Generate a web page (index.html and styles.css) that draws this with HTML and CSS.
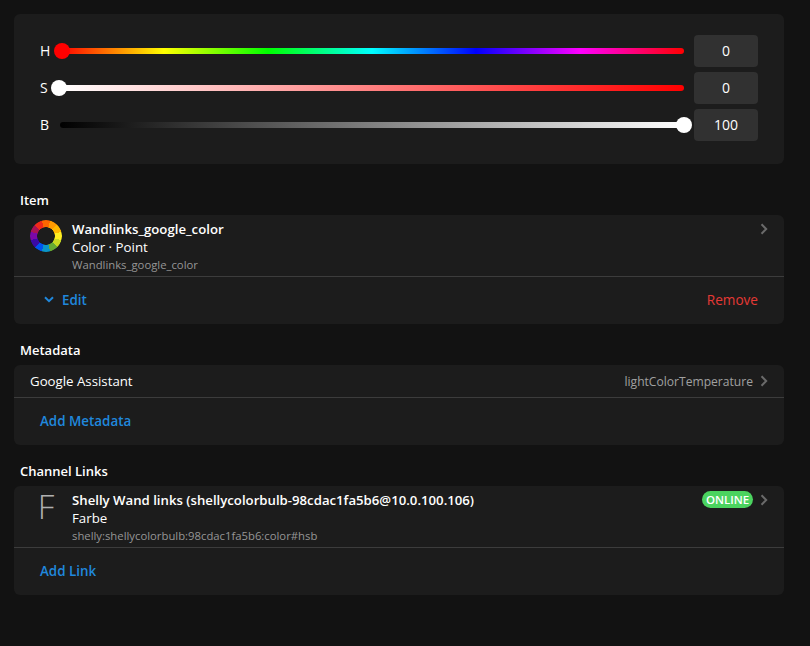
FILE: index.html
```html
<!DOCTYPE html>
<html lang="en">
<head>
<meta charset="utf-8">
<title>Item</title>
<link rel="stylesheet" href="styles.css">
</head>
<body>
<section class="card sliders">
  <div class="slider-row">
    <span class="slider-label">H</span>
    <div class="track track-h"><span class="knob knob-h"></span></div>
    <div class="num">0</div>
  </div>
  <div class="slider-row">
    <span class="slider-label">S</span>
    <div class="track track-s"><span class="knob knob-s"></span></div>
    <div class="num">0</div>
  </div>
  <div class="slider-row">
    <span class="slider-label">B</span>
    <div class="track track-b"><span class="knob knob-b"></span></div>
    <div class="num">100</div>
  </div>
</section>

<h2 class="heading heading-first">Item</h2>
<section class="card">
  <div class="media-row">
    <div class="media"><span class="wheel"></span></div>
    <div class="media-text">
      <div class="title">Wandlinks_google_color</div>
      <div class="sub">Color · Point</div>
      <div class="foot">Wandlinks_google_color</div>
    </div>
    <svg class="chev chev-top" viewBox="0 0 8 12"><path d="M1.5 1.2 6.2 6l-4.7 4.8"/></svg>
  </div>
  <div class="actions between">
    <a class="link edit"><svg class="down" viewBox="0 0 10 7"><path d="M1 1.2 5 5.2l4-4"/></svg>Edit</a>
    <a class="remove">Remove</a>
  </div>
</section>

<h2 class="heading">Metadata</h2>
<section class="card">
  <div class="meta-row">
    <span class="meta-name">Google Assistant</span>
    <span class="meta-val">lightColorTemperature</span>
    <svg class="chev" viewBox="0 0 8 12"><path d="M1.5 1.2 6.2 6l-4.7 4.8"/></svg>
  </div>
  <div class="actions wide"><a class="link">Add Metadata</a></div>
</section>

<h2 class="heading">Channel Links</h2>
<section class="card">
  <div class="media-row">
    <div class="media"><span class="letter">F</span></div>
    <div class="media-text">
      <div class="title">Shelly Wand links (shellycolorbulb-98cdac1fa5b6@10.0.100.106)</div>
      <div class="sub">Farbe</div>
      <div class="foot">shelly:shellycolorbulb:98cdac1fa5b6:color#hsb</div>
    </div>
    <span class="badge">ONLINE</span>
    <svg class="chev chev-top" viewBox="0 0 8 12"><path d="M1.5 1.2 6.2 6l-4.7 4.8"/></svg>
  </div>
  <div class="actions last"><a class="link">Add Link</a></div>
</section>
</body>
</html>
```

FILE: styles.css
```css
* { box-sizing: border-box; }
html, body { height: 100%; }
body {
  margin: 0;
  padding: 14px 26px 0 14px;
  background: #121212;
  color: #fff;
  font-family: "Open Sans", "Noto Sans", "Liberation Sans", sans-serif;
  font-size: 13px;
  overflow: hidden;
}
.card {
  background: #1c1c1c;
  border-radius: 6px;
}
.sliders {
  height: 150px;
  padding: 21px 26px 0 26px;
  display: flex;
  flex-direction: column;
  gap: 5px;
}
.slider-row {
  height: 32px;
  display: flex;
  align-items: center;
}
.slider-label { width: 20px; font-size: 14px; line-height: 18px; }
.track {
  position: relative;
  width: 624px;
  height: 6px;
  border-radius: 3px;
  margin-right: 10px;
}
.track-h { background: linear-gradient(to right, #f00 0%, #ff0 16.67%, #0f0 33.33%, #0ff 50%, #00f 66.67%, #f0f 83.33%, #f00 100%); }
.track-s { background: linear-gradient(to right, #fff, #f00); }
.track-b { background: linear-gradient(to right, #000, #fff); }
.knob {
  position: absolute;
  top: -5px;
  width: 16px;
  height: 16px;
  border-radius: 50%;
}
.knob-h { left: -6px; background: #f00; }
.knob-s { left: -9px; background: #fff; }
.knob-b { right: -8px; background: #fff; }
.num {
  width: 64px;
  height: 32px;
  background: #313131;
  border-radius: 4px;
  font-size: 14px;
  line-height: 32px;
  text-align: center;
}
.heading {
  margin: 0;
  height: 41px;
  padding: 17px 0 0 6px;
  font-size: 13px;
  line-height: 19px;
  font-weight: 600;
}
.heading-first {
  height: 51px;
  padding-top: 27px;
}
.media-row {
  position: relative;
  height: 62px;
  display: flex;
  border-bottom: 1px solid #3c3c3c;
  padding-right: 16px;
}
.media {
  width: 58px;
  flex: none;
  display: flex;
  justify-content: center;
  padding: 5px 0 0 6px;
}
.wheel {
  width: 32px;
  height: 32px;
  border-radius: 50%;
  background: conic-gradient(from -15deg,
    #ff6600 0 30deg, #ff9900 0 60deg, #ffb800 0 90deg, #ffee22 0 120deg,
    #c8d820 0 150deg, #66aa33 0 180deg, #0a96c8 0 210deg, #0055ee 0 240deg,
    #3a0aa5 0 270deg, #7a08a8 0 300deg, #a81255 0 330deg, #f02a1a 0 360deg);
  -webkit-mask: radial-gradient(circle, transparent 0 8.5px, #000 9px);
  mask: radial-gradient(circle, transparent 0 8.5px, #000 9px);
}
.letter {
  font-size: 33px;
  font-weight: 300;
  line-height: 36px;
  color: #b0b0b0;
  margin-top: -2px;
}
.media-text { flex: 1; padding-top: 5px; min-width: 0; }
.title { font-size: 13.2px; font-weight: 600; line-height: 19px; }
.sub { font-size: 13.3px; line-height: 17px; }
.foot { font-size: 11.3px; line-height: 17px; color: #969696; }
.chev {
  width: 8px;
  height: 12px;
  flex: none;
  fill: none;
  stroke: #6a6a6a;
  stroke-width: 2;
}
.chev-top { margin-top: 8px; }
.actions {
  height: 47px;
  padding-bottom: 2px;
  display: flex;
  align-items: center;
  font-size: 13.4px;
  font-weight: 500;
}
.between { justify-content: space-between; padding: 0 26px 2px 30px; }
.wide { padding-left: 26px; }
.last { padding-left: 26px; }
.link { color: #2088dc; font-weight: 600; display: flex; align-items: center; }
.down {
  width: 10px;
  height: 7px;
  margin-right: 8px;
  fill: none;
  stroke: #2088dc;
  stroke-width: 2;
}
.remove { color: #e53935; font-size: 13.6px; }
.meta-row {
  height: 33px;
  display: flex;
  align-items: center;
  padding: 0 16px 0 16px;
  border-bottom: 1px solid #3c3c3c;
}
.meta-name { flex: 1; font-size: 13.25px; }
.meta-val { color: #a0a0a0; font-size: 12.1px; margin-right: 7px; }
.badge {
  height: 17px;
  margin: 5px 7px 0 0;
  background: #4bd35f;
  border-radius: 9px;
  font-size: 11.5px;
  font-weight: 600;
  line-height: 17px;
  width: 51px;
  text-align: center;
}
```
